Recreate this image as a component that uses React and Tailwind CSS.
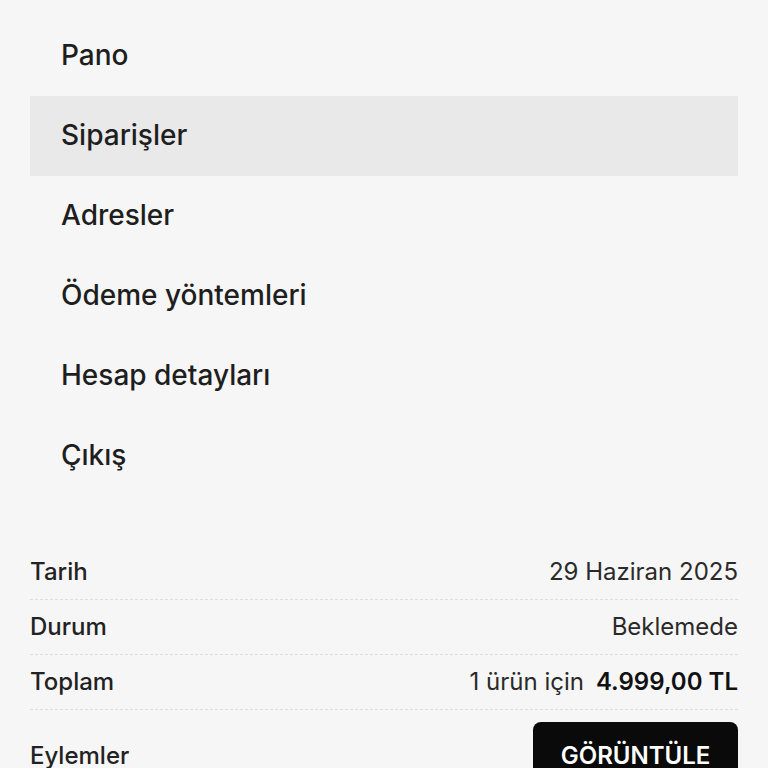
import React from "react";

const menuItems = [
    {label: "Pano", active: false},
    {label: "Siparişler", active: true},
    {label: "Adresler", active: false},
    {label: "Ödeme yöntemleri", active: false},
    {label: "Hesap detayları", active: false},
    {label: "Çıkış", active: false},
];

function OrderRow({ label, children }) {
    return (
        <div className="flex items-center justify-between h-[55px] border-b border-dashed border-[#dedede]">
            <span className="font-medium text-[#222]">{label}</span>
            <div className="flex items-center gap-3 text-[#2a2a2a]">{children}</div>
        </div>
    );
}

export default function App() {
    return (
        <div className="min-h-screen bg-[#f6f6f6] px-[30px] pt-4 font-['Inter',sans-serif] overflow-hidden h-[768px]">
            <nav className="flex flex-col">
                {menuItems.map((item) => (
                    <a
                        key={item.label}
                        href="#"
                        className={
                            "flex items-center h-20 pl-[31px] pb-[2px] text-[28px] font-medium text-[#1e1e1e] " +
                            (item.active ? "bg-[#e9e9e9]" : "")
                        }
                    >
                        {item.label}
                    </a>
                ))}
            </nav>

            <div className="mt-[49px] text-[24px]">
                <OrderRow label="Tarih">
                    <span>29 Haziran 2025</span>
                </OrderRow>
                <OrderRow label="Durum">
                    <span>Beklemede</span>
                </OrderRow>
                <OrderRow label="Toplam">
                    <span>1 ürün için</span>
                    <span className="font-semibold text-[#111]">4.999,00 TL</span>
                </OrderRow>
                <div className="flex items-center justify-between pt-[12px]">
                    <span className="font-medium text-[#222]">Eylemler</span>
                    <button className="h-[68px] w-[205px] rounded-lg bg-[#0a0a0a] text-white font-semibold text-[24px] uppercase">
                        Görüntüle
                    </button>
                </div>
            </div>
        </div>
    );
}
